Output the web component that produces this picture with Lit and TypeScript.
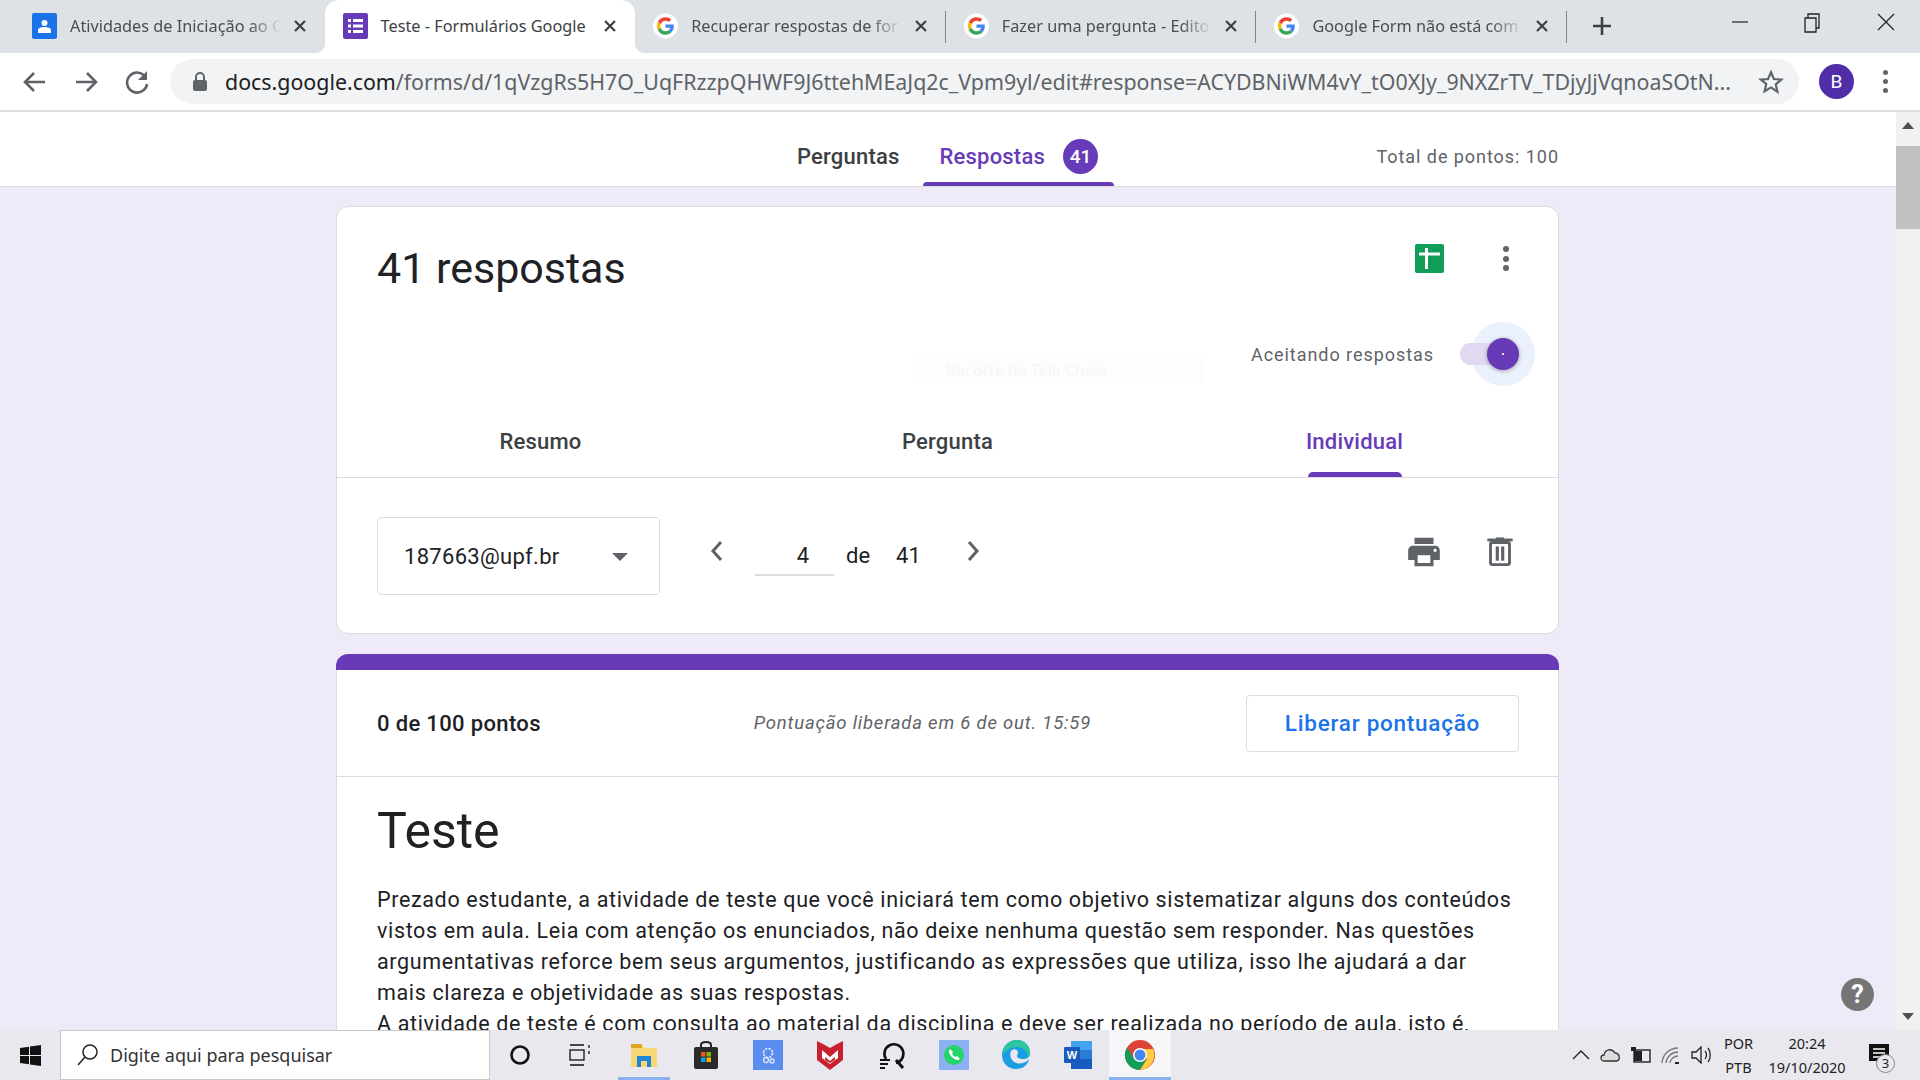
import { LitElement, html, css, svg } from 'lit';
import { customElement } from 'lit/decorators.js';

const gLogo = html`<svg class="fav" viewBox="0 0 26 26">
  <circle cx="13" cy="13" r="13" fill="#fff"></circle>
  <g transform="translate(4 4) scale(0.375)">
    <path fill="#EA4335" d="M24 9.5c3.5 0 6.7 1.2 9.2 3.6l6.9-6.9C35.9 2.4 30.5 0 24 0 14.6 0 6.5 5.4 2.6 13.2l8 6.2C12.4 13.7 17.7 9.5 24 9.5z"></path>
    <path fill="#4285F4" d="M47 24.5c0-1.6-.1-3.100-.4-4.500H24v9h12.900c-.6 3-2.200 5.500-4.800 7.200l7.700 6c4.500-4.200 7.200-10.300 7.200-17.700z"></path>
    <path fill="#FBBC05" d="M10.500 28.600c-.5-1.400-.8-3-.8-4.600s.3-3.200.8-4.600l-8-6.200C.9 16.500 0 20.100 0 24s.9 7.500 2.600 10.800l7.900-6.200z"></path>
    <path fill="#34A853" d="M24 48c6.500 0 11.900-2.100 15.900-5.800l-7.700-6c-2.100 1.400-4.900 2.300-8.200 2.300-6.300 0-11.600-4.200-13.500-9.900l-7.900 6.200C6.500 42.600 14.600 48 24 48z"></path>
  </g>
</svg>`;

const contactsIcon = html`<svg class="fav" viewBox="0 0 25 26">
  <rect width="25" height="26" rx="2" fill="#1a73e8"></rect>
  <circle cx="12.500" cy="10" r="3" fill="#fff"></circle>
  <path d="M6 20v-3c0-2 3-3 6.500-3s6.500 1 6.500 3v3z" fill="#fff"></path>
</svg>`;

const formsIcon = html`<svg class="fav" viewBox="0 0 25 26">
  <rect width="25" height="26" rx="2" fill="#673ab7"></rect>
  <g fill="#fff">
    <rect x="5" y="6" width="3" height="3"></rect><rect x="10" y="6" width="10" height="3"></rect>
    <rect x="5" y="11.500" width="3" height="3"></rect><rect x="10" y="11.500" width="10" height="3"></rect>
    <rect x="5" y="17" width="3" height="3"></rect><rect x="10" y="17" width="10" height="3"></rect>
  </g>
</svg>`;

// titles stop where the tab fades them out
const tabs = [
  { icon: contactsIcon, title: 'Atividades de Iniciação ao C', active: false, sep: false },
  { icon: formsIcon, title: 'Teste - Formulários Google', active: true, sep: false },
  { icon: gLogo, title: 'Recuperar respostas de for', active: false, sep: true },
  { icon: gLogo, title: 'Fazer uma pergunta - Edito', active: false, sep: true },
  { icon: gLogo, title: 'Google Form não está com', active: false, sep: true },
];

const closeX = html`<svg class="close" viewBox="0 0 14 14"><path d="M2 2l10 10M12 2L2 12" stroke="#3c4043" stroke-width="2.200" fill="none"></path></svg>`;

const taskIcons = [
  svg`<circle cx="16" cy="16" r="8.500" fill="none" stroke="#111" stroke-width="2.600"></circle>`,
  svg`<g fill="none" stroke="#111" stroke-width="1.300"><rect x="4" y="11" width="14" height="10"></rect><path d="M4 6h14M4 26h14M23 6v3M23 12v3"></path></g>`,
  svg`<path d="M3 6h11l3 3h12v19H3z" fill="#f8d775"></path><path d="M3 5h11v4H3z" fill="#e0a526"></path><path d="M9 28V17h14v11h-4v-6h-6v6z" fill="#1f87d6"></path>`,
  svg`<path d="M11 9V6c0-4 10-4 10 0v3" fill="none" stroke="#222" stroke-width="2"></path><rect x="4" y="8" width="24" height="22" rx="2" fill="#2b2b2b"></rect><rect x="11" y="13" width="4.500" height="4.500" fill="#f25022"></rect><rect x="16.500" y="13" width="4.500" height="4.500" fill="#7fba00"></rect><rect x="11" y="18.500" width="4.500" height="4.500" fill="#00a4ef"></rect><rect x="16.500" y="18.500" width="4.500" height="4.500" fill="#ffb900"></rect>`,
  svg`<rect x="1" y="1" width="30" height="30" fill="#5b8def"></rect><circle cx="16" cy="14" r="4.500" fill="none" stroke="#dfe8fb" stroke-width="1.600" stroke-dasharray="2.500 1"></circle><circle cx="14" cy="21" r="2.500" fill="none" stroke="#dfe8fb" stroke-width="1.300"></circle><circle cx="20" cy="22" r="2" fill="none" stroke="#dfe8fb" stroke-width="1.300"></circle>`,
  svg`<path d="M3 2l6 3 7 4 7-4 6-3v19l-13 10L3 21z" fill="#c8202f"></path><path d="M8 11l8 7 8-7v8l-8 6-8-6z" fill="#fff"></path><path d="M11 18l5 4 5-4v3l-5 3-5-3z" fill="#c8202f"></path>`,
  svg`<path d="M10 20A9.500 9.500 0 1 1 20 24" fill="none" stroke="#111" stroke-width="2.600"></path><path d="M20 21l7 8" stroke="#111" stroke-width="3"></path><path d="M4 21h10M4 25h8M4 29h5" stroke="#111" stroke-width="2"></path>`,
  svg`<rect x="1" y="1" width="30" height="30" fill="#8cb1f2"></rect><circle cx="16" cy="16" r="10" fill="#25d366"></circle><path d="M12 10c-2 2-1 5 2 8s6 4 8 2l-3-3-2 1-3-3 1-2z" fill="#fff"></path>`,
  svg`<path d="M29 20c-1 6-6 10-13 10C8 30 2 24 2 16S8 1 17 1c8 0 13 6 13 13 0 4-3 6-7 6-3 0-6-1-6-3 0-1 1-2 1-3 0-3-3-5-6-3-3 3-2 9 2 12 3 2 10 3 15-3z" fill="#1b9de2"></path><path d="M2 16C3 7 9 1 17 1c8 0 13 6 13 13 0 2-1 3-2 4 0-6-5-10-11-10S5 11 2 16z" fill="#2cc5a0"></path>`,
  svg`<path d="M9 2h21v28H9z" fill="#2b7cd3"></path><path d="M9 2h21v9H9z" fill="#41a5ee"></path><path d="M9 20h21v10H9z" fill="#185abd"></path><rect x="2" y="8" width="16" height="16" rx="1" fill="#185abd"></rect><text x="10" y="20" font-size="11" font-family="Liberation Sans" font-weight="700" fill="#fff" text-anchor="middle">W</text>`,
  svg`<circle cx="16" cy="16" r="15" fill="#db4437"></circle><path d="M3 8.500A15 15 0 0 0 16 31l6-10-6-5-6 4z" fill="#0f9d58"></path><path d="M16 10h13a15 15 0 0 1-13 21l7-11z" fill="#ffcd40"></path><circle cx="16" cy="16" r="7" fill="#fff"></circle><circle cx="16" cy="16" r="5.500" fill="#4285f4"></circle>`,
];

@customElement('app-root')
export class AppRoot extends LitElement {
  static styles = css`
    :host {
      display: flex;
      flex-direction: column;
      width: 100%;
      height: 100vh;
      overflow: hidden;
      font-family: Roboto, sans-serif;
      color: #202124;
    }
    /* chrome tabs */
    .tabstrip {
      flex: none;
      height: 53px;
      background: #dee1e6;
      display: flex;
      padding-left: 14px;
      font-family: 'Noto Sans', sans-serif;
      font-size: 16.300px;
      color: #3c4043;
    }
    .tab {
      position: relative;
      width: 310.600px;
      display: flex;
      align-items: center;
      padding: 0 18px 1px;
      box-sizing: border-box;
    }
    .tab.active {
      background: #fff;
      border-radius: 14px 14px 0 0;
    }
    .tab.active::before,
    .tab.active::after {
      content: '';
      position: absolute;
      bottom: 0;
      width: 10px;
      height: 10px;
    }
    .tab.active::before {
      left: -10px;
      background: radial-gradient(circle at 0 0, #dee1e6 10px, #fff 10.500px);
    }
    .tab.active::after {
      right: -10px;
      background: radial-gradient(circle at 100% 0, #dee1e6 10px, #fff 10.500px);
    }
    .tab.sep::after {
      content: '';
      position: absolute;
      right: 0;
      top: 11px;
      height: 32px;
      width: 1px;
      background: #80868b;
    }
    .fav {
      width: 25px;
      height: 26px;
      flex: none;
    }
    .tab-title {
      flex: 1;
      min-width: 0;
      margin-left: 13px;
      white-space: nowrap;
      -webkit-mask-image: linear-gradient(90deg, #000 85%, transparent 100%);
      mask-image: linear-gradient(90deg, #000 85%, transparent 100%);
      color: #4a4d51;
    }
    .tab.active .tab-title {
      -webkit-mask-image: none;
      mask-image: none;
      color: #3c4043;
    }
    .close {
      width: 14px;
      height: 14px;
      flex: none;
      margin-left: 12px;
    }
    .newtab {
      width: 24px;
      height: 24px;
      margin: 14px 0 0 23px;
    }
    .winctl {
      margin-left: auto;
      margin-right: -2px;
      display: flex;
      align-items: flex-start;
    }
    .winctl svg {
      width: 73px;
      height: 44px;
    }
    /* toolbar */
    .toolbar {
      flex: none;
      height: 59px;
      box-sizing: border-box;
      border-bottom: 2px solid #dadce0;
      background: #fff;
      display: flex;
      align-items: center;
      padding: 0 20px;
    }
    .nav-ic {
      width: 30px;
      height: 30px;
      flex: none;
      margin-right: 21px;
    }
    .omni {
      width: 1629px;
      height: 45px;
      margin-left: -3px;
      border-radius: 23px;
      background: #f1f3f4;
      display: flex;
      align-items: center;
      box-sizing: border-box;
      padding-left: 22px;
      flex: none;
      font-family: 'Noto Sans', sans-serif;
      font-size: 21.370px;
      color: #5f6368;
      white-space: nowrap;
    }
    .omni b {
      font-weight: 400;
      color: #202124;
    }
    .lock {
      width: 16px;
      height: 20px;
      margin-right: 17px;
      flex: none;
    }
    .url {
      width: 1507px;
      flex: none;
    }
    .star {
      width: 26px;
      height: 26px;
      margin-left: 26px;
      flex: none;
    }
    .avatar {
      width: 35px;
      height: 35px;
      border-radius: 50%;
      background: #512da8;
      color: #fff;
      font-size: 19px;
      display: flex;
      align-items: center;
      justify-content: center;
      margin-left: 20px;
      flex: none;
    }
    .kebab-top {
      width: 6px;
      margin-left: 29px;
      flex: none;
      display: flex;
      flex-direction: column;
      gap: 4px;
    }
    .kebab-top i {
      width: 5px;
      height: 5px;
      border-radius: 50%;
      background: #5f6368;
    }
    /* page */
    .viewport {
      flex: 1;
      min-height: 0;
      display: flex;
      overflow: hidden;
      position: relative;
    }
    .page {
      flex: 1;
      min-width: 0;
      background: #eeeaf8;
      overflow: hidden;
    }
    .scrollbar {
      width: 24px;
      flex: none;
      background: #f1f1f1;
      display: flex;
      flex-direction: column;
      align-items: center;
    }
    .sb-arrow {
      width: 0;
      height: 0;
      border-left: 6px solid transparent;
      border-right: 6px solid transparent;
      margin-top: 10px;
      border-bottom: 7px solid #505050;
    }
    .sb-arrow.down {
      margin-top: auto;
      margin-bottom: 10px;
      border-bottom: 0;
      border-top: 7px solid #505050;
    }
    .sb-thumb {
      width: 100%;
      height: 83px;
      margin-top: 17px;
      background: #c1c1c1;
    }
    .topnav {
      height: 75px;
      background: #fff;
      border-bottom: 1px solid #dadce0;
      box-sizing: border-box;
      display: flex;
      padding-left: 336px;
      font-size: 22px;
      font-weight: 500;
      letter-spacing: 0.2px;
    }
    .topnav-inner {
      width: 1223px;
      display: flex;
      padding-left: 461px;
      box-sizing: border-box;
    }
    .nav-item {
      height: 74px;
      display: flex;
      align-items: center;
      padding: 14px 16px 0 0;
      box-sizing: border-box;
      color: #3c4043;
    }
    .nav-item.on {
      margin-left: 7px;
      padding-left: 17px;
      color: #673ab7;
      position: relative;
    }
    .nav-item.on::after {
      content: '';
      position: absolute;
      left: 0;
      right: 0;
      bottom: 0;
      height: 4px;
      border-radius: 4px 4px 0 0;
      background: #673ab7;
    }
    .badge {
      width: 35px;
      height: 35px;
      border-radius: 50%;
      background: #673ab7;
      color: #fff;
      font-size: 19px;
      letter-spacing: 0;
      display: flex;
      align-items: center;
      justify-content: center;
      margin-left: 18px;
    }
    .total {
      margin-left: auto;
      align-self: center;
      padding-top: 14px;
      font-size: 18px;
      font-weight: 400;
      letter-spacing: 0.95px;
      color: #5f6368;
    }
    .column {
      width: 1223px;
      margin: 19px 0 0 336px;
    }
    .card {
      background: #fff;
      border: 1px solid #dadce0;
      border-radius: 12px;
      box-sizing: border-box;
      height: 428px;
      position: relative;
    }
    .card-head {
      display: flex;
      justify-content: space-between;
      padding: 31px 48px 0 40px;
      height: 100px;
      box-sizing: border-box;
    }
    .card-head h1 {
      margin: 0;
      font-size: 43px;
      font-weight: 400;
      line-height: 60px;
      color: #202124;
    }
    .head-icons {
      display: flex;
      gap: 59px;
      padding-top: 6px;
    }
    .sheet {
      width: 29px;
      height: 29px;
    }
    .kebab {
      width: 7px;
      display: flex;
      flex-direction: column;
      gap: 3.500px;
      padding-top: 2px;
    }
    .kebab i {
      width: 6px;
      height: 6px;
      border-radius: 50%;
      background: #5f6368;
    }
    .accept {
      display: flex;
      justify-content: flex-end;
      align-items: center;
      height: 46px;
      margin-top: 24px;
      padding-right: 58px;
      font-size: 18px;
      letter-spacing: 0.95px;
      color: #5f6368;
    }
    .toggle {
      position: relative;
      width: 40px;
      height: 22px;
      border-radius: 11px;
      background: #e1d8f1;
      margin-left: 26px;
      flex: none;
    }
    .halo {
      position: absolute;
      left: 11px;
      top: -21px;
      width: 64px;
      height: 64px;
      border-radius: 50%;
      background: #ebf1fc;
    }
    .toggle-bar {
      position: absolute;
      inset: 0;
      border-radius: 11px;
      background: #e1d8f1;
    }
    .knob {
      position: absolute;
      left: 27px;
      top: -5px;
      width: 32px;
      height: 32px;
      border-radius: 50%;
      background: #673ab7;
      box-shadow: 0 1px 4px rgba(0, 0, 0, 0.35);
      display: flex;
      align-items: center;
      justify-content: center;
    }
    .knob::after {
      content: '';
      width: 2px;
      height: 2px;
      background: #e6e0f4;
    }
    .ghost {
      position: absolute;
      left: 575px;
      top: 150px;
      width: 292px;
      height: 27px;
      box-sizing: border-box;
      padding-left: 34px;
      background: #fdfdfe;
      color: #f6f6f6;
      font-family: 'Noto Sans', sans-serif;
      font-size: 16px;
      line-height: 27px;
    }
    .subtabs {
      display: flex;
      height: 80px;
      margin-top: 21px;
      border-bottom: 1px solid #dadce0;
      box-sizing: border-box;
      font-size: 22px;
      font-weight: 500;
      letter-spacing: 0.2px;
      color: #3c4043;
    }
    .subtab {
      flex: 1;
      display: flex;
      justify-content: center;
      align-items: center;
      padding-top: 7px;
      box-sizing: border-box;
      position: relative;
    }
    .subtab.on {
      color: #673ab7;
    }
    .subtab.on::after {
      content: '';
      position: absolute;
      bottom: 0;
      left: 50%;
      width: 94px;
      margin-left: -47px;
      height: 5px;
      border-radius: 5px 5px 0 0;
      background: #673ab7;
    }
    .pager {
      display: flex;
      align-items: flex-start;
      padding: 39px 0 0 40px;
    }
    .select {
      width: 283px;
      height: 78px;
      border: 1px solid #dadce0;
      border-radius: 4px;
      box-sizing: border-box;
      display: flex;
      align-items: center;
      padding: 0 31px 0 26px;
      justify-content: space-between;
      font-size: 22px;
      letter-spacing: 0.3px;
      color: #202124;
    }
    .caret {
      width: 0;
      height: 0;
      border-left: 8px solid transparent;
      border-right: 8px solid transparent;
      border-top: 8px solid #5f6368;
      margin-top: 2px;
    }
    .chev {
      width: 14px;
      height: 22px;
      flex: none;
      margin-top: 23px;
    }
    .num {
      width: 79px;
      height: 59px;
      margin-left: 31px;
      border-bottom: 2px solid #dadce0;
      box-sizing: border-box;
      text-align: right;
      padding: 26px 25px 0 0;
      font-size: 22px;
      line-height: 26px;
    }
    .of {
      font-size: 22px;
      line-height: 26px;
      padding-top: 26px;
      margin-left: 12px;
    }
    .of.n {
      margin-left: 26px;
    }
    .pager .chev.next {
      margin-left: 45px;
    }
    .pager .chev.prev {
      margin-left: 50px;
    }
    .actions {
      margin-left: auto;
      display: flex;
      gap: 38px;
      padding: 16px 39px 0 0;
    }
    .actions svg {
      width: 38px;
      height: 38px;
    }
    .band {
      margin-top: 20px;
      height: 16px;
      background: #673ab7;
      border-radius: 12px 12px 0 0;
    }
    .sheet-card {
      background: #fff;
      border: 1px solid #dadce0;
      border-width: 0 1px;
    }
    .score {
      height: 107px;
      border-bottom: 1px solid #dadce0;
      box-sizing: border-box;
      display: flex;
      align-items: center;
      padding: 0 39px 0 40px;
    }
    .score b {
      font-size: 22px;
      font-weight: 500;
      letter-spacing: 0.35px;
    }
    .released {
      margin-left: 213px;
      font-size: 18.500px;
      font-style: italic;
      letter-spacing: 0.8px;
      color: #5f6368;
    }
    .release-btn {
      margin-left: auto;
      width: 273px;
      height: 57px;
      border: 1px solid #dadce0;
      border-radius: 4px;
      box-sizing: border-box;
      display: flex;
      align-items: center;
      justify-content: center;
      font-size: 22.500px;
      font-weight: 500;
      letter-spacing: 0.75px;
      color: #1a73e8;
    }
    .body {
      padding: 21px 39px 0 40px;
    }
    .body h2 {
      margin: 0 0 20px;
      font-size: 50px;
      font-weight: 400;
      line-height: 66px;
      color: #202124;
    }
    .body p {
      margin: 0;
      font-size: 21.500px;
      letter-spacing: 0.64px;
      line-height: 31px;
      color: #202124;
    }
    .help {
      position: absolute;
      left: 1841px;
      top: 866px;
      width: 33px;
      height: 33px;
      border-radius: 50%;
      background: #757575;
      color: #fff;
      font-size: 25px;
      font-weight: 700;
      display: flex;
      align-items: center;
      justify-content: center;
    }
    /* windows taskbar */
    .taskbar {
      flex: none;
      height: 50px;
      background: #e9e8ee;
      display: flex;
      align-items: stretch;
    }
    .start {
      width: 60px;
      display: flex;
      align-items: center;
      justify-content: center;
      flex: none;
    }
    .start svg {
      width: 21px;
      height: 21px;
    }
    .search {
      width: 430px;
      flex: none;
      margin-right: -1px;
      background: #fff;
      border: 1px solid #c8c8c8;
      box-sizing: border-box;
      display: flex;
      align-items: center;
      padding-left: 15px;
      font-family: 'Noto Sans', sans-serif;
      font-size: 18px;
      color: #333;
    }
    .search svg {
      width: 24px;
      height: 24px;
      margin-right: 10px;
    }
    .task-item {
      width: 62px;
      flex: none;
      display: flex;
      align-items: center;
      justify-content: center;
      position: relative;
      box-sizing: border-box;
    }
    .task-item svg {
      width: 32px;
      height: 32px;
    }
    .task-item.open::after {
      content: '';
      position: absolute;
      left: 5px;
      right: 5px;
      bottom: 0;
      height: 3px;
      background: #8cb1f2;
    }
    .task-item.focus {
      background: #f6f6f9;
    }
    .task-item.focus::after {
      left: 0;
      right: 0;
    }
    .tray {
      margin-left: auto;
      display: flex;
      align-items: center;
      font-family: 'Noto Sans', sans-serif;
      font-size: 14.500px;
      color: #222;
    }
    .tray-ic {
      width: 24px;
      height: 24px;
      margin-right: 6px;
      flex: none;
    }
    .lang {
      margin-left: 5px;
      text-align: center;
      line-height: 24px;
    }
    .clock {
      margin-left: 10px;
      width: 88px;
      text-align: center;
      line-height: 24px;
    }
    .notif {
      position: relative;
      width: 24px;
      height: 24px;
      margin: 0 29px 0 16px;
    }
    .notif svg {
      width: 24px;
      height: 24px;
    }
    .notif span {
      position: absolute;
      left: 9px;
      top: 11px;
      width: 19px;
      height: 19px;
      border-radius: 50%;
      border: 1px solid #888;
      background: #e9e8ee;
      box-sizing: border-box;
      font-size: 13px;
      line-height: 17px;
      text-align: center;
    }
  `;

  render() {
    return html`
      <div class="tabstrip">
        ${tabs.map(
          (t) => html`<div class="tab ${t.active ? 'active' : ''} ${t.sep ? 'sep' : ''}">
            ${t.icon}<span class="tab-title">${t.title}</span>${closeX}
          </div>`,
        )}
        <svg class="newtab" viewBox="0 0 24 24"><path d="M12 3v18M3 12h18" stroke="#3c4043" stroke-width="2.600"></path></svg>
        <div class="winctl">
          <svg viewBox="0 0 73 44"><path d="M29 22h16" stroke="#222" stroke-width="1.200"></path></svg>
          <svg viewBox="0 0 73 44"><path d="M29 18h11v14H29zM32 18v-4h11v14h-3" fill="none" stroke="#222" stroke-width="1.300"></path></svg>
          <svg viewBox="0 0 73 44"><path d="M29 14l16 16M45 14L29 30" stroke="#222" stroke-width="1.200"></path></svg>
        </div>
      </div>
      <div class="toolbar">
        <svg class="nav-ic" viewBox="0 0 30 30"><path d="M25 15H6M14 6l-9 9 9 9" fill="none" stroke="#5f6368" stroke-width="2.600"></path></svg>
        <svg class="nav-ic" viewBox="0 0 30 30"><path d="M5 15h19M16 6l9 9-9 9" fill="none" stroke="#5f6368" stroke-width="2.600"></path></svg>
        <svg class="nav-ic" viewBox="0 0 30 30"><path d="M24 11A10 10 0 1 0 25 17" fill="none" stroke="#5f6368" stroke-width="2.600"></path><path d="M25 4v9h-9z" fill="#5f6368"></path></svg>
        <div class="omni">
          <svg class="lock" viewBox="0 0 16 20"><path d="M4 8V5a4 4 0 0 1 8 0v3" fill="none" stroke="#5f6368" stroke-width="2"></path><rect x="1" y="8" width="14" height="11" rx="2" fill="#5f6368"></rect></svg>
          <div class="url"><b>docs.google.com</b>/forms/d/1qVzgRs5H7O_UqFRzzpQHWF9J6ttehMEaJq2c_Vpm9yl/edit#response=ACYDBNiWM4vY_tO0XJy_9NXZrTV_TDjyJjVqnoaSOtN...</div>
          <svg class="star" viewBox="0 0 24 24"><path d="M12 3l2.700 6.200 6.800.6-5.100 4.500 1.500 6.700L12 17l-5.900 3.500 1.500-6.700L2.500 9.800l6.800-.6z" fill="none" stroke="#5f6368" stroke-width="2"></path></svg>
        </div>
        <div class="avatar">B</div>
        <div class="kebab-top"><i></i><i></i><i></i></div>
      </div>
      <div class="viewport">
        <div class="page">
          <div class="topnav">
            <div class="topnav-inner">
              <div class="nav-item">Perguntas</div>
              <div class="nav-item on">Respostas<span class="badge">41</span></div>
              <div class="total">Total de pontos: 100</div>
            </div>
          </div>
          <div class="column">
            <div class="card">
              <div class="card-head">
                <h1>41 respostas</h1>
                <div class="head-icons">
                  <svg class="sheet" viewBox="0 0 29 29"><rect width="29" height="29" rx="2" fill="#0f9d58"></rect><path d="M4 10h21M11.500 4v21" stroke="#fff" stroke-width="3"></path></svg>
                  <div class="kebab"><i></i><i></i><i></i></div>
                </div>
              </div>
              <div class="accept">
                Aceitando respostas
                <div class="toggle">
                  <div class="halo"></div>
                  <div class="toggle-bar"></div>
                  <div class="knob"></div>
                </div>
              </div>
              <div class="ghost">Recorte de Tela Cheia</div>
              <div class="subtabs">
                <div class="subtab">Resumo</div>
                <div class="subtab">Pergunta</div>
                <div class="subtab on">Individual</div>
              </div>
              <div class="pager">
                <div class="select">187663@upf.br<span class="caret"></span></div>
                <svg class="chev prev" viewBox="0 0 14 22"><path d="M11 2L3 11l8 9" fill="none" stroke="#5f6368" stroke-width="3"></path></svg>
                <div class="num">4</div>
                <div class="of">de</div>
                <div class="of n">41</div>
                <svg class="chev next" viewBox="0 0 14 22"><path d="M3 2l8 9-8 9" fill="none" stroke="#5f6368" stroke-width="3"></path></svg>
                <div class="actions">
                  <svg viewBox="0 0 24 24"><path fill="#5f6368" d="M19 8H5c-1.660 0-3 1.340-3 3v6h4v4h12v-4h4v-6c0-1.660-1.340-3-3-3zm-3 11H8v-5h8v5zm3-7c-.55 0-1-.45-1-1s.45-1 1-1 1 .45 1 1-.45 1-1 1zm-1-9H6v4h12V3z"></path></svg>
                  <svg viewBox="0 0 24 24" fill="#5f6368"><rect x="4" y="3.500" width="16" height="1.800"></rect><rect x="9.500" y="2.800" width="5" height="1"></rect><rect x="6" y="6" width="12" height="14" rx="1.200" fill="none" stroke="#5f6368" stroke-width="1.800"></rect><rect x="9.300" y="8.500" width="2" height="9"></rect><rect x="12.700" y="8.500" width="2" height="9"></rect></svg>
                </div>
              </div>
            </div>
            <div class="band"></div>
            <div class="sheet-card">
              <div class="score">
                <b>0 de 100 pontos</b>
                <span class="released">Pontuação liberada em 6 de out. 15:59</span>
                <span class="release-btn">Liberar pontuação</span>
              </div>
              <div class="body">
                <h2>Teste</h2>
                <p>Prezado estudante, a atividade de teste que você iniciará tem como objetivo sistematizar alguns dos conteúdos vistos em aula. Leia com atenção os enunciados, não deixe nenhuma questão sem responder. Nas questões argumentativas reforce bem seus argumentos, justificando as expressões que utiliza, isso lhe ajudará a dar mais clareza e objetividade as suas respostas.</p>
                <p>A atividade de teste é com consulta ao material da disciplina e deve ser realizada no período de aula, isto é,</p>
              </div>
            </div>
          </div>
        </div>
        <div class="scrollbar">
          <div class="sb-arrow"></div>
          <div class="sb-thumb"></div>
          <div class="sb-arrow down"></div>
        </div>
        <div class="help">?</div>
      </div>
      <div class="taskbar">
        <div class="start">
          <svg viewBox="0 0 21 21"><path d="M0 3l9-1.300V10H0zM10 1.500L21 0v10H10zM0 11h9v8.300L0 18zM10 11h11v10l-11-1.500z" fill="#111"></path></svg>
        </div>
        <div class="search">
          <svg viewBox="0 0 24 24"><circle cx="14" cy="9" r="7" fill="none" stroke="#222" stroke-width="1.500"></circle><path d="M9 14l-7 8" stroke="#222" stroke-width="1.500"></path></svg>
          Digite aqui para pesquisar
        </div>
        ${taskIcons.map(
          (ic, i) => html`<div class="task-item ${i === 2 || i === 10 ? 'open' : ''} ${i === 10 ? 'focus' : ''}">
            <svg viewBox="0 0 32 32">${ic}</svg>
          </div>`,
        )}
        <div class="tray">
          <svg class="tray-ic" viewBox="0 0 24 24"><path d="M4 16l8-8 8 8" fill="none" stroke="#222" stroke-width="1.400"></path></svg>
          <svg class="tray-ic" viewBox="0 0 24 24"><path d="M5 18c-4 0-4-6 0-6 1-6 8-7 11-2 5 0 6 8 1 8z" fill="#dcdcdc" stroke="#333" stroke-width="1.300"></path></svg>
          <svg class="tray-ic" viewBox="0 0 24 24"><rect x="5" y="7" width="16" height="12" fill="none" stroke="#222" stroke-width="1.400"></rect><rect x="5" y="8" width="8" height="10" fill="#222"></rect><path d="M2 4h5v4H2z" fill="#222"></path></svg>
          <svg class="tray-ic" viewBox="0 0 24 24"><path d="M3 20A16 16 0 0 1 19 5M7 20A12 12 0 0 1 19 9M11 20a8 8 0 0 1 8-7" fill="none" stroke="#777" stroke-width="1.300"></path><path d="M16 20h4" stroke="#222" stroke-width="2"></path></svg>
          <svg class="tray-ic" viewBox="0 0 24 24"><path d="M3 9h4l5-5v16l-5-5H3z" fill="none" stroke="#222" stroke-width="1.300"></path><path d="M16 8c2 2 2 6 0 8M19 5c3 4 3 10 0 14" fill="none" stroke="#222" stroke-width="1.300"></path></svg>
          <div class="lang">POR<br />PTB</div>
          <div class="clock">20:24<br />19/10/2020</div>
          <div class="notif">
            <svg viewBox="0 0 24 24"><path d="M2 1h20v17H2z" fill="#111"></path><path d="M6 6h12M6 10h12M6 14h8" stroke="#fff" stroke-width="1.500"></path></svg>
            <span>3</span>
          </div>
        </div>
      </div>
    `;
  }
}
